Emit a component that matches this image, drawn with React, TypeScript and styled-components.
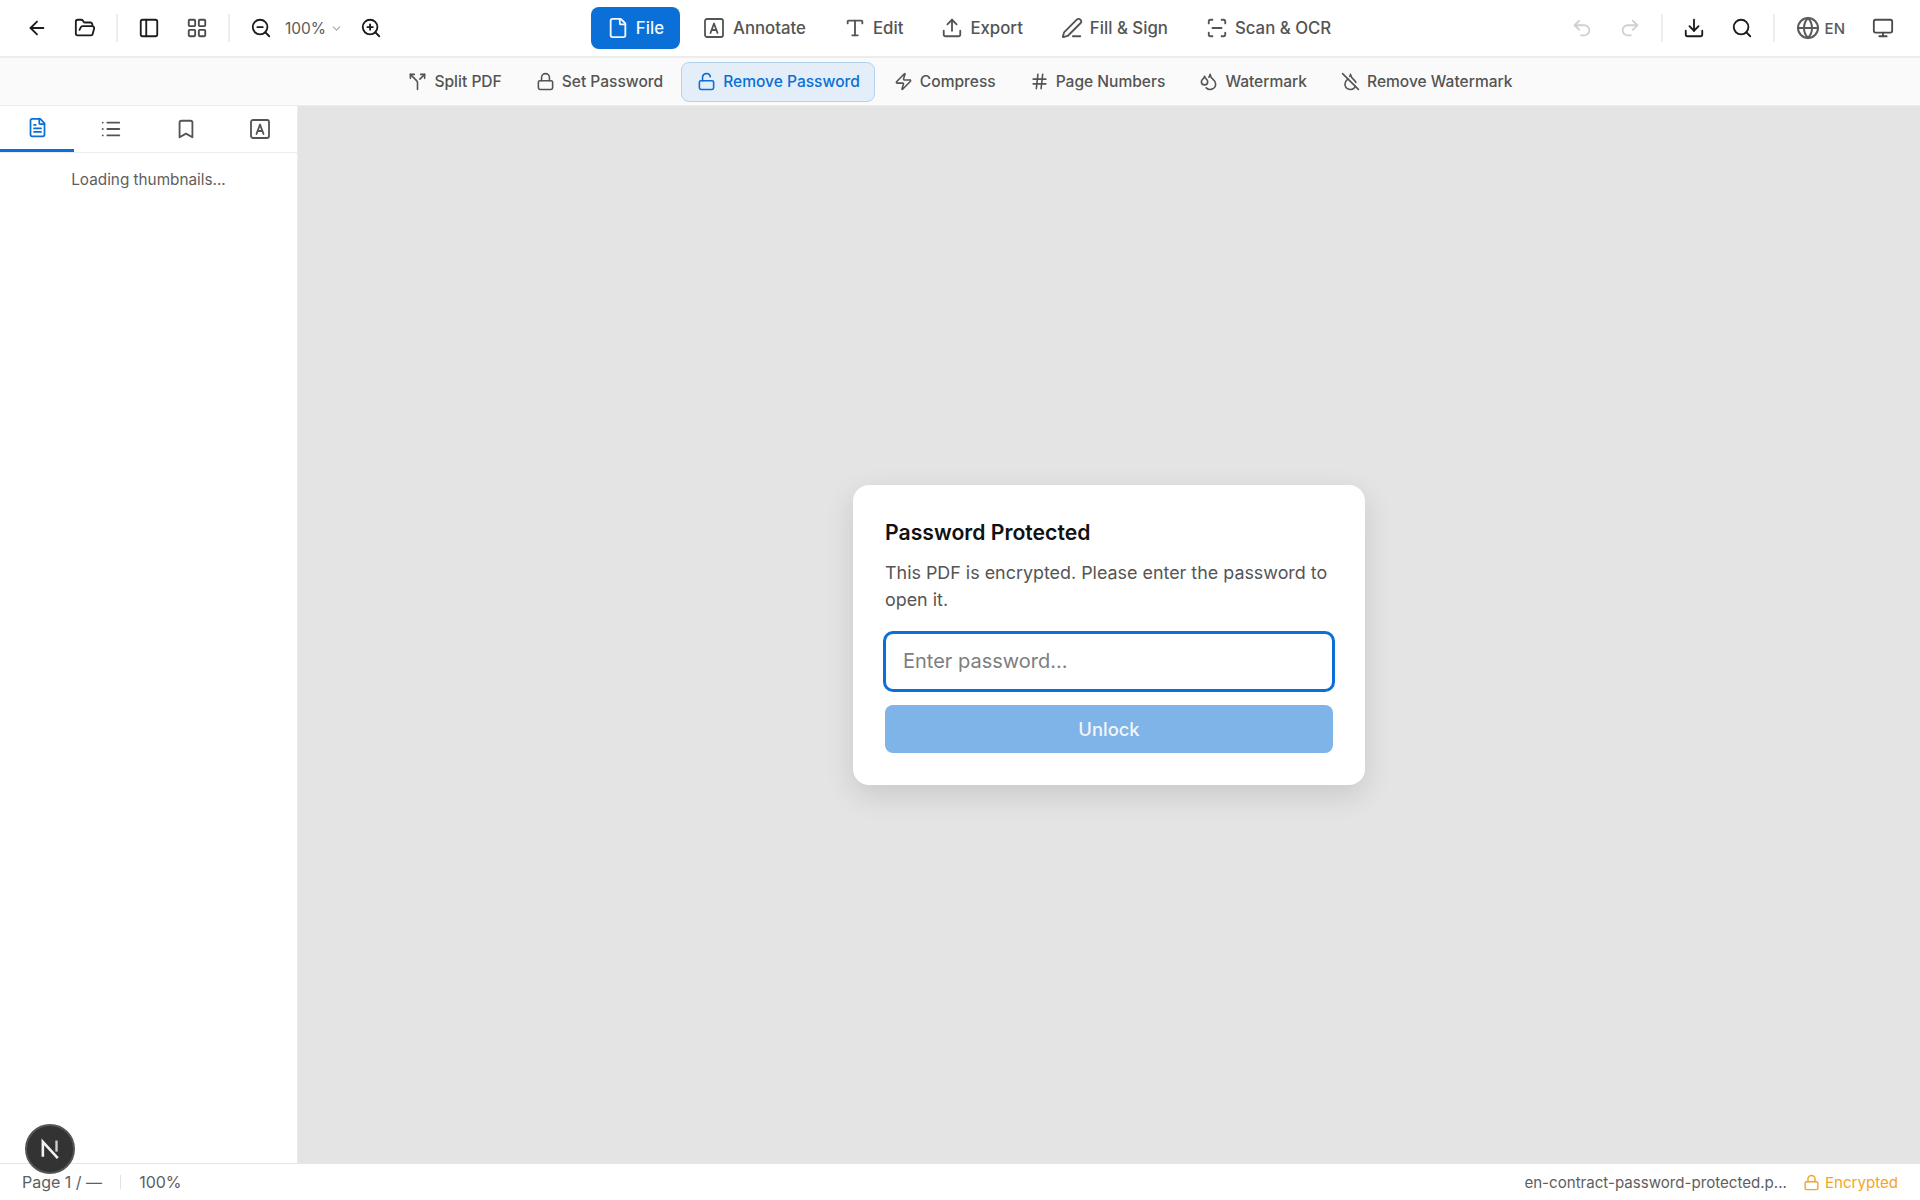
import React from "react";
import styled, { createGlobalStyle } from "styled-components";
import {
  ArrowLeft, Bookmark, ChevronDown, Download, DropletOff, Droplets, File, FileText, FolderOpen, Globe, Hash,
  LayoutGrid, List, Lock, LockOpen, Monitor, PanelLeft, PenLine, Redo2, ScanLine, Search, Split, Type, Undo2,
  Upload, Zap, ZoomIn, ZoomOut,
} from "lucide-react";

const GlobalStyle = createGlobalStyle`
  html, body, #root {
    margin: 0;
    height: 100%;
  }
  body {
    font-family: Inter, "Liberation Sans", sans-serif;
    color: #4b4b4b;
    background: #ffffff;
  }
`;

function BoxedA({ size = 24 }: { size?: number }) {
  return (
    <svg width={size} height={size} viewBox="0 0 24 24" fill="none" stroke="currentColor" strokeWidth="1.8" strokeLinecap="round" strokeLinejoin="round">
      <rect x="3" y="3" width="18" height="18" rx="2" />
      <path d="M8.5 17 12 7.5 15.5 17" />
      <path d="M9.7 14h4.6" />
    </svg>
  );
}

const Page = styled.div`
  height: 100vh;
  display: flex;
  flex-direction: column;
  overflow: hidden;
  position: relative;
`;

const TopBar = styled.header`
  flex: 0 0 58px;
  box-sizing: border-box;
  display: grid;
  grid-template-columns: 1fr auto 1fr;
  align-items: center;
  padding: 0 10px 0 16px;
  border-bottom: 2px solid #ededed;
`;

const Cluster = styled.div<{ $end?: boolean }>`
  display: flex;
  align-items: center;
  justify-content: ${p => (p.$end ? "flex-end" : "flex-start")};
`;

const IconButton = styled.button<{ $muted?: boolean; $dark?: boolean }>`
  width: 42px;
  height: 42px;
  padding: 0;
  margin-right: 6px;
  flex-shrink: 0;
  display: flex;
  align-items: center;
  justify-content: center;
  background: none;
  border: 0;
  color: ${p => (p.$muted ? "#d0d0d0" : p.$dark ? "#1c1c1c" : "#4b4b4b")};
`;

const Separator = styled.span`
  width: 2px;
  height: 28px;
  margin: 0 10px 0 4px;
  background: #ededed;
`;

const ZoomValue = styled.span`
  display: flex;
  align-items: center;
  gap: 4px;
  font-size: 15.5px;
  color: #5a5a5a;
  margin: 0 7px 0 -3px;
  svg {
    color: #a8a8a8;
  }
`;

const MainTabs = styled.nav`
  display: flex;
  align-items: center;
  gap: 6px;
  margin-left: 12px;
`;

const MainTab = styled.button<{ $active?: boolean }>`
  height: 42px;
  box-sizing: border-box;
  padding: 0 16px;
  display: flex;
  align-items: center;
  gap: 7px;
  border: 0;
  border-radius: 8px;
  font: 500 16.8px Inter, sans-serif;
  color: ${p => (p.$active ? "#f4f8fd" : "#545454")};
  background: ${p => (p.$active ? "#0a6fd6" : "transparent")};
`;

const Language = styled.span`
  display: flex;
  align-items: center;
  gap: 5px;
  font-size: 15px;
  font-weight: 500;
  color: #5a5a5a;
  margin: 0 17px 0 11px;
`;

const SubBar = styled.div`
  flex: 0 0 48px;
  box-sizing: border-box;
  display: flex;
  align-items: center;
  justify-content: center;
  gap: 3px;
  background: #fafafa;
  border-bottom: 1px solid #ececec;
`;

const SubTool = styled.button<{ $active?: boolean }>`
  height: 40px;
  box-sizing: border-box;
  padding: 0 14px 0 15px;
  display: flex;
  align-items: center;
  gap: 7px;
  border-radius: 8px;
  border: 1px solid ${p => (p.$active ? "#b4d2f0" : "transparent")};
  font: 500 15.55px Inter, sans-serif;
  color: ${p => (p.$active ? "#0a6fd6" : "#545454")};
  background: ${p => (p.$active ? "#e3eef9" : "transparent")};
`;

const Body = styled.div`
  flex: 1;
  min-height: 0;
  display: flex;
`;

const Sidebar = styled.aside`
  flex: 0 0 298px;
  box-sizing: border-box;
  border-right: 1px solid #ececec;
  background: #ffffff;
`;

const SideTabs = styled.div`
  display: grid;
  grid-template-columns: repeat(4, 1fr);
  height: 47px;
  box-sizing: border-box;
  border-bottom: 1px solid #ececec;
`;

const SideTab = styled.button<{ $active?: boolean }>`
  height: 46px;
  padding: 0;
  display: flex;
  align-items: center;
  justify-content: center;
  background: none;
  border: 0;
  border-bottom: ${p => (p.$active ? "3px solid #0a6fd6" : "0")};
  color: ${p => (p.$active ? "#0a6fd6" : "#545454")};
`;

const SideNote = styled.p`
  margin: 17px 0 0;
  text-align: center;
  font-size: 15.3px;
  line-height: 20px;
  color: #5e5e5e;
`;

const Canvas = styled.main`
  flex: 1;
  display: flex;
  align-items: center;
  justify-content: center;
  background: #e4e4e4;
`;

const Dialog = styled.section`
  width: 512px;
  box-sizing: border-box;
  padding: 32px;
  background: #ffffff;
  border-radius: 16px;
  box-shadow: 0 10px 30px rgba(0, 0, 0, 0.12);
`;

const DialogTitle = styled.h2`
  margin: 0 0 12px;
  font-size: 21.2px;
  line-height: 30px;
  font-weight: 600;
  color: #111111;
`;

const DialogText = styled.p`
  margin: 0 0 20px;
  font-size: 17.9px;
  line-height: 27px;
  color: #555555;
`;

const PasswordInput = styled.input`
  display: block;
  width: 100%;
  height: 57px;
  box-sizing: border-box;
  padding: 0 18px;
  border: 0;
  border-radius: 8px;
  outline: 3px solid #0a6fd6;
  outline-offset: -1px;
  font: 400 20px Inter, sans-serif;
  color: #222222;
  background: #ffffff;
  &::placeholder {
    color: #7e7e7e;
    opacity: 1;
  }
`;

const UnlockButton = styled.button`
  display: block;
  width: 100%;
  height: 48px;
  margin-top: 15px;
  border: 0;
  border-radius: 8px;
  font: 500 18.4px Inter, sans-serif;
  color: #f1f6fc;
  background: #7fb4e8;
`;

const StatusBar = styled.footer`
  flex: 0 0 37px;
  box-sizing: border-box;
  display: flex;
  align-items: center;
  justify-content: space-between;
  padding: 0 22px;
  border-top: 1px solid #e6e6e6;
  font-size: 15.1px;
  color: #5e5e5e;
`;

const StatusGroup = styled.div`
  display: flex;
  align-items: center;
`;

const StatusReadout = styled.span`
  font-size: 16px;
`;

const StatusDivider = styled.span`
  width: 1px;
  height: 14px;
  margin: 0 18px;
  background: #e2e2e2;
`;

const Encrypted = styled.span`
  display: flex;
  align-items: center;
  gap: 5px;
  margin-left: 16px;
  color: #f5a524;
`;

const DevBadge = styled.div`
  position: absolute;
  left: 25px;
  top: 1124px;
  width: 50px;
  height: 50px;
  box-sizing: border-box;
  display: flex;
  align-items: center;
  justify-content: center;
  border-radius: 50%;
  border: 2px solid #555555;
  background: #333333;
`;

const mainTabs = [
  { label: "File", icon: <File size={22} />, active: true },
  { label: "Annotate", icon: <BoxedA /> },
  { label: "Edit", icon: <Type size={22} /> },
  { label: "Export", icon: <Upload size={22} /> },
  { label: "Fill & Sign", icon: <PenLine size={22} /> },
  { label: "Scan & OCR", icon: <ScanLine size={22} /> },
];

const subTools = [
  { label: "Split PDF", icon: <Split size={19} /> },
  { label: "Set Password", icon: <Lock size={19} /> },
  { label: "Remove Password", icon: <LockOpen size={19} />, active: true },
  { label: "Compress", icon: <Zap size={19} /> },
  { label: "Page Numbers", icon: <Hash size={19} /> },
  { label: "Watermark", icon: <Droplets size={19} /> },
  { label: "Remove Watermark", icon: <DropletOff size={19} /> },
];

export default function App() {
  return (
    <Page>
      <GlobalStyle />
      <TopBar>
        <Cluster>
          <IconButton $dark><ArrowLeft size={22} /></IconButton>
          <IconButton $dark><FolderOpen size={22} /></IconButton>
          <Separator />
          <IconButton $dark><PanelLeft size={22} /></IconButton>
          <IconButton><LayoutGrid size={22} /></IconButton>
          <Separator />
          <IconButton $dark><ZoomOut size={22} /></IconButton>
          <ZoomValue>100%<ChevronDown size={13} /></ZoomValue>
          <IconButton $dark><ZoomIn size={22} /></IconButton>
        </Cluster>
        <MainTabs>
          {mainTabs.map(t => (
            <MainTab key={t.label} $active={t.active}>{t.icon}{t.label}</MainTab>
          ))}
        </MainTabs>
        <Cluster $end>
          <IconButton $muted><Undo2 size={22} /></IconButton>
          <IconButton $muted><Redo2 size={22} /></IconButton>
          <Separator />
          <IconButton $dark><Download size={22} /></IconButton>
          <IconButton $dark><Search size={22} /></IconButton>
          <Separator />
          <Language><Globe size={24} />EN</Language>
          <IconButton><Monitor size={22} /></IconButton>
        </Cluster>
      </TopBar>
      <SubBar>
        {subTools.map(t => (
          <SubTool key={t.label} $active={t.active}>{t.icon}{t.label}</SubTool>
        ))}
      </SubBar>
      <Body>
        <Sidebar>
          <SideTabs>
            <SideTab $active><FileText size={21} /></SideTab>
            <SideTab><List size={22} /></SideTab>
            <SideTab><Bookmark size={22} /></SideTab>
            <SideTab><BoxedA /></SideTab>
          </SideTabs>
          <SideNote>Loading thumbnails...</SideNote>
        </Sidebar>
        <Canvas>
          <Dialog>
            <DialogTitle>Password Protected</DialogTitle>
            <DialogText>This PDF is encrypted. Please enter the password to open it.</DialogText>
            <PasswordInput type="password" placeholder="Enter password..." />
            <UnlockButton>Unlock</UnlockButton>
          </Dialog>
        </Canvas>
      </Body>
      <StatusBar>
        <StatusGroup>
          <StatusReadout>Page 1 / —</StatusReadout>
          <StatusDivider />
          <StatusReadout>100%</StatusReadout>
        </StatusGroup>
        <StatusGroup>
          <span>en-contract-password-protected.p...</span>
          <Encrypted><Lock size={17} />Encrypted</Encrypted>
        </StatusGroup>
      </StatusBar>
      <DevBadge>
        <svg width="26" height="26" viewBox="0 0 20 20" fill="none">
          <path d="M4.5 16V4.5L16 17" stroke="#f2f2f2" strokeWidth="2" />
          <path d="M15 3.5V12" stroke="#cfcfcf" strokeWidth="1.8" />
        </svg>
      </DevBadge>
    </Page>
  );
}
